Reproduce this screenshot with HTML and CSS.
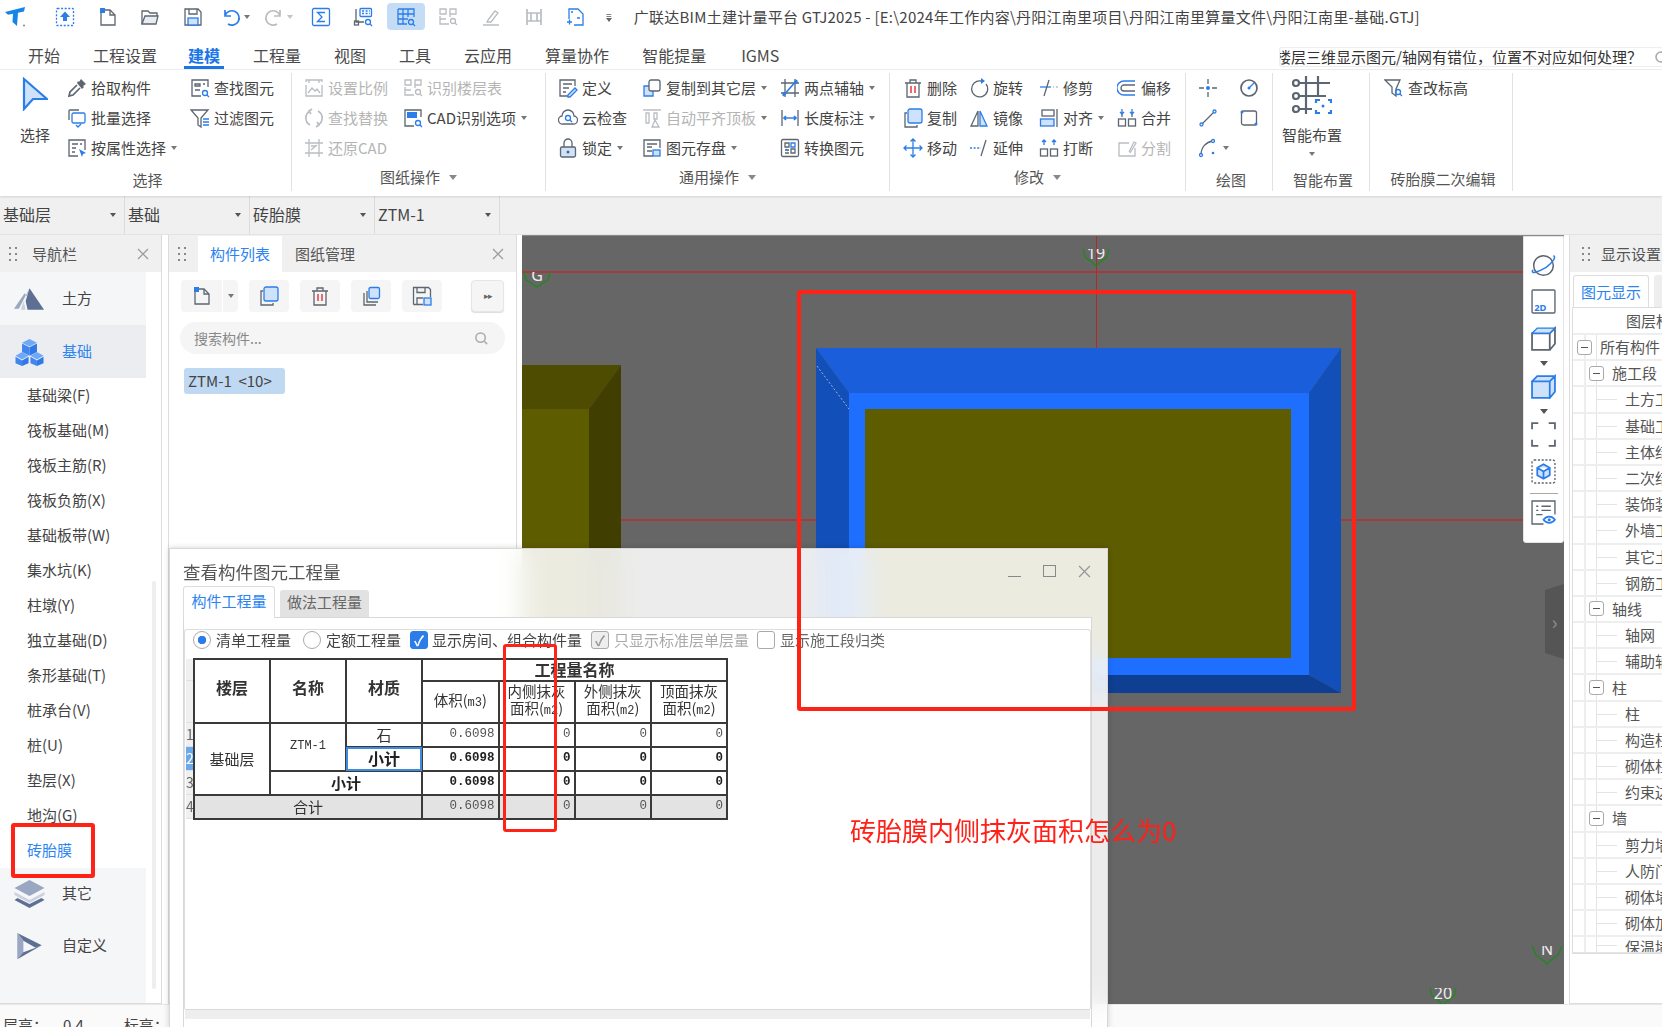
FILE: index.html
```html
<!DOCTYPE html>
<html lang="zh-CN">
<head>
<meta charset="utf-8">
<title>广联达BIM土建计量平台 GTJ2025</title>
<link rel="stylesheet" href="styles.css">
</head>
<body>
<svg class="sprite" aria-hidden="true">
<defs><clipPath id="cut"><rect x="-20" y="0" width="40" height="30"/></clipPath></defs>
<symbol id="logo" viewBox="0 0 22 22"><path class="bf2" d="M1 6 21 1l-1 4.500-6 1.200L13 20 8.500 16l.5-8.200-5 1z"/><circle class="bf3" cx="20" cy="19.500" r="1"/></symbol>
<symbol id="upload" viewBox="0 0 20 20"><rect class="b dash" x="1.500" y="1.500" width="17" height="17" rx="1"/><path class="bf" d="M10 4.500 15 10h-3v4H8v-4H5z"/></symbol>
<symbol id="newf" viewBox="0 0 20 20"><path class="g" d="M3 3h9l5 5v10H3z"/><path class="g" d="M12 3v5h5"/><rect class="bf" x="2" y="1" width="5" height="5"/></symbol>
<symbol id="folder" viewBox="0 0 20 20"><path class="g" d="M2 17V4h6l2 2h7v3"/><path class="g lfn" d="M2 17l3-8h13l-2 8z"/></symbol>
<symbol id="save" viewBox="0 0 20 20"><path class="g" d="M2 2h13l3 3v13H2z"/><path class="g" d="M6 2v5h8V2"/><rect class="b lf" x="5" y="11" width="10" height="7"/></symbol>
<symbol id="undo" viewBox="0 0 20 20"><path class="b w2" d="M4 3v6h6M4 9a7.200 7.200 0 1 1 3 8"/></symbol>
<symbol id="redo" viewBox="0 0 20 20"><path class="lg w2" d="M16 3v6h-6m6 0a7.200 7.200 0 1 0-3 8"/></symbol>
<symbol id="sigma" viewBox="0 0 20 20"><rect class="b" x="1.500" y="1.500" width="17" height="17" rx="1.500"/><path class="b" d="M14 5.500H6.500L11 10l-4.500 4.500H14"/></symbol>
<symbol id="cadq" viewBox="0 0 20 20"><path class="g" d="M3 2v13h8"/><rect class="b" x="7" y="1.500" width="11.500" height="8" rx="1"/><path class="b dash" d="M9 4h8M9 6.500h8"/><rect class="g" x="1.500" y="14" width="4" height="4"/><circle class="b" cx="15" cy="15" r="2.500"/><path class="b" d="m17 17 2 2"/></symbol>
<symbol id="gridq" viewBox="0 0 20 20"><path class="b" d="M2 2h16v8M2 2v15h9M2 7h16M2 12h10M7 2v15M12 2v8"/><circle class="b" cx="15" cy="15" r="2.500"/><path class="b" d="m17 17 2 2"/></symbol>
<symbol id="floors" viewBox="0 0 20 20"><path class="lg" d="M2 2h6v5H2zM12 2h6v5h-6zM2 9v8h9M2 12h6M12 7v3"/><circle class="lg" cx="15" cy="14" r="2.500"/><path class="lg" d="m17 16 2 2"/></symbol>
<symbol id="pen" viewBox="0 0 20 20"><path class="lg" d="m7 13 7-9 3 2-7 9H6zM2 18h16"/></symbol>
<symbol id="cols" viewBox="0 0 20 20"><path class="lg w2" d="M3 2v16M17 2v16M3 6h14M3 14h14M7 6v8M13 6v8"/></symbol>
<symbol id="loop" viewBox="0 0 20 20"><path class="b" d="M3 12V2h9l5 5v11H8"/><path class="b" d="M6 15H1m2.500-2.500v5M7 5H5M14 11h-3"/></symbol>
<symbol id="arrow" viewBox="0 0 26 34"><path class="lf b w3" d="M2 2 25 22 11 22 2 32z"/></symbol>
<symbol id="pick" viewBox="0 0 20 20"><path class="gf" d="m12 4 2-3 5 5-3 2 1 1-2 2-5-6 1-2z"/><path class="g w2" d="M10 7 3 14l-1 4 4-1 7-7"/></symbol>
<symbol id="batch" viewBox="0 0 20 20"><path class="g" d="M12 2H3a1 1 0 0 0-1 1v9"/><rect class="b" x="5" y="5" width="13" height="10" rx="1.500"/><path class="b" d="m9 17 2 2 3-3"/></symbol>
<symbol id="attr" viewBox="0 0 20 20"><path class="g" d="M18 12V2H2v16h9"/><path class="g" d="M5 6h6M5 10h4M5 14h3M13 6h2"/><path class="bf" d="m12 11 7 4-3 1-1 3z"/></symbol>
<symbol id="find" viewBox="0 0 20 20"><path class="g" d="M18 9V2H2v16h9"/><path class="g" d="M5 6h5v2H5zM13 6h2M5 12h5"/><circle class="b" cx="15" cy="15" r="2.500"/><path class="b" d="m17 17 2 2"/></symbol>
<symbol id="filter" viewBox="0 0 20 20"><path class="g" d="M1 2h17l-7 8v9l-3-2v-7z"/><path class="b" d="M13 11h6M13 14h6M13 17h6"/></symbol>
<symbol id="scale" viewBox="0 0 20 20"><path class="lg" d="M2 4V2h16v2M2 7v11h16V7M5 2v3M15 2v3M4 15l4-5 3 3 2-2 3 4"/></symbol>
<symbol id="replace" viewBox="0 0 20 20"><path class="lg w2" d="M6 3a8 8 0 0 0 0 14M14 3a8 8 0 0 1 0 14M8 1 5 3l2 3M12 19l3-2-2-3"/></symbol>
<symbol id="cadopt" viewBox="0 0 20 20"><path class="g" d="M18 9V2H2v16h9"/><rect class="bf" x="4" y="4" width="10" height="6"/><circle class="b" cx="15" cy="15" r="2.500"/><path class="b" d="m17 17 2 2"/></symbol>
<symbol id="restore" viewBox="0 0 20 20"><path class="lg" d="M5 1v18M15 1v18M1 5h18M1 15h18M7 12l6-5M7 8h5"/></symbol>
<symbol id="define" viewBox="0 0 20 20"><path class="g" d="M17 8V2H2v16h8"/><path class="g" d="M5 6h9M5 10h6M5 14h3"/><path class="b lf" d="m10 17 7-7 2 2-7 7h-2z"/></symbol>
<symbol id="cloud" viewBox="0 0 20 20"><path class="g" d="M5 16a4 4 0 0 1-1-8 6 6 0 0 1 12 0 4 4 0 0 1-1 8z"/><circle class="b" cx="10" cy="10" r="2.500"/><path class="b" d="m12 12 2 2"/></symbol>
<symbol id="lock" viewBox="0 0 20 20"><path class="g" d="M6 9V5a4 4 0 0 1 8 0v4"/><rect class="g lf" x="2.500" y="9" width="15" height="10" rx="1.500"/><circle class="gf" cx="10" cy="14" r="1.500"/></symbol>
<symbol id="copyto" viewBox="0 0 20 20"><path class="b lf" d="M2 8h9v10H2z"/><rect class="g wf" x="7" y="2" width="11" height="11" rx="2"/></symbol>
<symbol id="autoal" viewBox="0 0 20 20"><path class="lg" d="M1 2h18M4 5v10h3V5zM12 5v6h3V5zM13 12l-3 7h7z"/></symbol>
<symbol id="store" viewBox="0 0 20 20"><path class="g" d="M18 10V2H2v16h9"/><path class="g" d="M5 6h10M5 9h5M5 13h5"/><rect class="b lf" x="11" y="12" width="7" height="6"/></symbol>
<symbol id="twop" viewBox="0 0 20 20"><path class="g" d="M5 1v18M15 1v18M1 5h18M1 15h18"/><path class="b w2" d="M3 18 17 2"/><circle class="bf" cx="4" cy="16" r="1.800"/><circle class="bf" cx="16" cy="4" r="1.800"/></symbol>
<symbol id="dim" viewBox="0 0 20 20"><path class="g" d="M2 2v16M18 2v16"/><path class="b w2" d="M4 10h12M6 8l-2 2 2 2M14 8l2 2-2 2"/></symbol>
<symbol id="conv" viewBox="0 0 20 20"><rect class="g" x="1.500" y="1.500" width="17" height="17" rx="1.500"/><path class="g" d="M5 5h4v4H5zM11 11h4v4h-4zM5 12h4M5 15h4"/><path class="b" d="M11 5h4v4h-4zM8 13l-2-2"/></symbol>
<symbol id="del" viewBox="0 0 20 20"><path class="g" d="M2 5h16M7 5V2h6v3M4 5v14h12V5"/><path class="r" d="M8 8v7M12 8v7"/></symbol>
<symbol id="rot" viewBox="0 0 20 20"><path class="g" d="M12 3a8 8 0 1 0 5 3"/><path class="bf" d="m12 0 4 3-4 3z"/></symbol>
<symbol id="trim" viewBox="0 0 20 20"><path class="b" d="M1 9h11"/><path class="g" d="M5 18 10 2"/><path class="lg" d="M14 9h1M17 9h2"/></symbol>
<symbol id="offset" viewBox="0 0 20 20"><path class="b" d="M18 3H7a6.500 6.500 0 0 0 0 14h11"/><path class="g" d="M18 7H7a3 3 0 0 0 0 6h11"/></symbol>
<symbol id="copy" viewBox="0 0 20 20"><path class="g" d="M4 5H2v14h12v-2"/><rect class="b lf" x="5" y="1" width="14" height="14" rx="2"/></symbol>
<symbol id="mirror" viewBox="0 0 20 20"><path class="g" d="M9 3 2 18h7z"/><path class="lf b" d="m11 3 7 15h-7z"/></symbol>
<symbol id="align" viewBox="0 0 20 20"><path class="g" d="M18 1v18"/><rect class="g" x="3" y="2" width="12" height="6"/><rect class="b lf" x="1.500" y="11" width="13.500" height="7"/></symbol>
<symbol id="merge" viewBox="0 0 20 20"><rect class="g" x="1.500" y="11" width="7" height="7"/><rect class="g" x="11.500" y="11" width="7" height="7"/><path class="g" d="M5 6v3M15 6v3"/><path class="b" d="M5 1v5M3 4l2 2 2-2M15 1v5M13 4l2 2 2-2"/></symbol>
<symbol id="move" viewBox="0 0 20 20"><path class="b" d="M10 1v18M1 10h18M7.500 3.500 10 1l2.500 2.500M7.500 16.500 10 19l2.500-2.500M3.500 7.500 1 10l2.500 2.500M16.500 7.500 19 10l-2.500 2.500"/></symbol>
<symbol id="ext" viewBox="0 0 20 20"><path class="b dash" d="M1 10h11"/><path class="g" d="m12 18 5-16"/></symbol>
<symbol id="brk" viewBox="0 0 20 20"><rect class="g" x="1.500" y="11" width="7" height="7"/><rect class="g" x="11.500" y="11" width="7" height="7"/><path class="b" d="M5 7V2M3 4l2-2 2 2M15 7V2M13 4l2-2 2 2"/></symbol>
<symbol id="split" viewBox="0 0 20 20"><path class="lg" d="M12 5H2v13h16v-8M12 14l5-10 2 1-6 10"/></symbol>
<symbol id="pt" viewBox="0 0 20 20"><path class="g" d="M10 1v5M10 14v5M1 10h5M14 10h5"/><circle class="bf" cx="10" cy="10" r="2"/></symbol>
<symbol id="circ" viewBox="0 0 20 20"><circle class="g w2" cx="10" cy="10" r="8"/><path class="b" d="m10 10 5-5"/><circle class="bf" cx="10" cy="10" r="1.500"/></symbol>
<symbol id="line" viewBox="0 0 20 20"><path class="g" d="m4 16 12-12"/><circle class="b wf" cx="3.500" cy="16.500" r="1.500"/><circle class="b wf" cx="16.500" cy="3.500" r="1.500"/></symbol>
<symbol id="rect" viewBox="0 0 20 20"><rect class="g" x="2.500" y="3" width="15" height="14" rx="2"/><circle class="bf" cx="3" cy="4" r="1.500"/><circle class="bf" cx="17" cy="16" r="1.500"/></symbol>
<symbol id="arc" viewBox="0 0 20 20"><path class="g" d="M3 17C3 9 8 4 15 3"/><circle class="b wf" cx="3" cy="17" r="1.500"/><circle class="b wf" cx="15" cy="3" r="1.500"/><circle class="bf" cx="15" cy="15" r="1.300"/></symbol>
<symbol id="smart" viewBox="0 0 40 40"><path class="g w3" d="M4 4h0M14 1v38M26 1v25M14 8h24M14 21h20"/><circle class="g wf w3" cx="4" cy="8" r="3"/><circle class="g wf w3" cx="4" cy="21" r="3"/><circle class="g wf w3" cx="4" cy="34" r="3"/><path class="g w3" d="M7 8h7M7 21h7M7 34h14"/><rect class="wfn" x="20" y="22" width="20" height="18"/><path class="b w3" d="M24 28v-3h4M36 25h3v3M39 35v3h-3M28 38h-4v-3"/><circle class="bf" cx="31" cy="31" r="1.500"/></symbol>
<symbol id="qh" viewBox="0 0 20 20"><path class="g" d="M1 2h15l-4 9v7l-4-3V9z"/><circle class="b" cx="14" cy="14" r="2.500"/><path class="b" d="m16 16 2 2"/></symbol>
<symbol id="mount" viewBox="0 0 32 24"><path class="mf1" d="M16 1 5 22H0L11 6l2 3z"/><path class="mf2" d="M16 1 31 23H14l-2-9z"/><path class="mf3" d="M10 14l2 9H7z"/></symbol>
<symbol id="cubes" viewBox="0 0 30 30"><path class="cb1" d="m15 1 8 4-8 4-8-4z"/><path class="cb2" d="m7 6 8 4v9l-8-4z"/><path class="cb3" d="m23 6-8 4v9l8-4z"/><path class="cb1" d="m7 15 7 4-7 4-7-4z"/><path class="cb2" d="m0 20 7 4v6l-7-3z"/><path class="cb3" d="m14 20-7 4v6l7-3z"/><path class="cb1" d="m23 15 7 4-7 4-7-4z"/><path class="cb2" d="m16 20 7 4v6l-7-3z"/><path class="cb3" d="m30 20-7 4v6l7-3z"/></symbol>
<symbol id="layers" viewBox="0 0 30 28"><path class="lyr1" d="M15 0 30 8l-15 8L0 8z"/><path class="lyr2" d="m0 12 15 8 15-8 0 3-15 8-15-8z" opacity=".7"/><path class="lyr3" d="m3 18 12 6 12-6 3 2-15 8-15-8z"/></symbol>
<symbol id="custom" viewBox="0 0 30 32"><path class="lyr3" d="M1 1 29 15 22 18 8 10z"/><path class="lyr1" d="M1 1 8 10V23L1 31z"/><path class="lyr3" d="M8 23 22 18 29 15 1 31z"/></symbol>
<symbol id="dup2" viewBox="0 0 20 20"><path class="g" d="M3 7v12h12M1 4"/><path class="g" d="M6 5v11h11"/><rect class="b lf" x="8" y="1.500" width="10.500" height="11" rx="1.500"/></symbol>
<symbol id="saveall" viewBox="0 0 20 20"><path class="g" d="M1.500 18.500v-17h15l2 2V11M1.500 18.500H11M5 1.500v5h8v-5M5 18.500V12h6"/><rect class="b lf" x="12" y="12" width="7" height="7"/></symbol>
<symbol id="planet" viewBox="0 0 28 28"><circle class="g w2" cx="14" cy="14" r="11"/><path class="b w2" d="M2 19C-1 25 10 20 17 16 24 11 29 4 25 3"/></symbol>
<symbol id="t2d" viewBox="0 0 24 24"><rect class="g" x="1" y="1" width="22" height="22" rx="1"/><text x="3" y="21" class="t2d">2D</text></symbol>
<symbol id="cube" viewBox="0 0 24 24"><path class="g w2" d="M1 7h17v16H1zM18 7l5-5v15l-5 6"/><path class="b lf" d="M1 7l5-5h17l-5 5z"/></symbol>
<symbol id="cubef" viewBox="0 0 24 24"><path class="b lf w2" d="M1 7h17v16H1zM18 7l5-5v15l-5 6zM1 7l5-5h17l-5 5z"/></symbol>
<symbol id="frame" viewBox="0 0 24 24"><path class="g w2" d="M1 7V1h6M17 1h6v6M23 17v6h-6M7 23H1v-6"/></symbol>
<symbol id="dcube" viewBox="0 0 24 24"><rect class="g dash" x="1" y="1" width="22" height="22" rx="2"/><path class="b lf w2" d="m12 5 6 3.500v7L12 19l-6-3.500v-7zM6 8.500l6 3.500 6-3.500M12 12v7"/></symbol>
<symbol id="listeye" viewBox="0 0 24 24"><path class="g" d="M23 14V1H1v22h11M5 6h2M10 6h9M5 10h2M10 10h9M5 14h6"/><path class="b w2 wf" d="M12 19c3-4 8-4 11 0-3 4-8 4-11 0z"/><circle class="bf" cx="17.500" cy="19" r="1.500"/></symbol>
<symbol id="mag" viewBox="0 0 16 16"><circle class="mg" cx="7" cy="7" r="5"/><path class="mg" d="m11 11 3 3"/></symbol>
<symbol id="x" viewBox="0 0 12 12"><path class="xx" d="m1 1 10 10M11 1 1 11"/></symbol>
</svg>

<header class="titlebar">
  <svg class="logo"><use href="#logo"/></svg>
  <div class="quick">
    <svg class="ic"><use href="#upload"/></svg>
    <svg class="ic"><use href="#newf"/></svg>
    <svg class="ic"><use href="#folder"/></svg>
    <svg class="ic"><use href="#save"/></svg>
    <span class="qi"><svg class="ic"><use href="#undo"/></svg><i class="caret qc"></i></span>
    <span class="qi"><svg class="ic"><use href="#redo"/></svg><i class="caret qc light"></i></span>
    <svg class="ic"><use href="#sigma"/></svg>
    <svg class="ic"><use href="#cadq"/></svg>
    <span class="active"><svg class="ic"><use href="#gridq"/></svg></span>
    <svg class="ic"><use href="#floors"/></svg>
    <svg class="ic"><use href="#pen"/></svg>
    <svg class="ic"><use href="#cols"/></svg>
    <svg class="ic"><use href="#loop"/></svg>
    <span class="customize">=<i class="caret tiny"></i></span>
  </div>
  <div class="apptitle">广联达BIM土建计量平台 GTJ2025 - [E:\2024年工作内容\丹阳江南里项目\丹阳江南里算量文件\丹阳江南里-基础.GTJ]</div>
</header>

<nav class="menubar">
  <span class="tab">开始</span><span class="tab">工程设置</span><span class="tab on">建模</span><span class="tab">工程量</span><span class="tab">视图</span><span class="tab">工具</span><span class="tab">云应用</span><span class="tab">算量协作</span><span class="tab">智能提量</span><span class="tab igms">IGMS</span>
  <div class="helpbox"><span class="helptext">楼层三维显示图元/轴网有错位，位置不对应如何处理？</span><svg class="helpmag"><use href="#mag"/></svg></div>
</nav>

<section class="ribbon">
  <div class="group g1">
    <div class="gbody">
      <div class="big bigsel"><svg class="bigarrow"><use href="#arrow"/></svg><span>选择</span></div>
      <span class="it"><svg class="ic"><use href="#pick"/></svg>拾取构件</span>
      <span class="it"><svg class="ic"><use href="#find"/></svg>查找图元</span>
      <span class="it"><svg class="ic"><use href="#batch"/></svg>批量选择</span>
      <span class="it"><svg class="ic"><use href="#filter"/></svg>过滤图元</span>
      <span class="it"><svg class="ic"><use href="#attr"/></svg>按属性选择<i class="caret"></i></span>
    </div>
    <div class="glabel low">选择</div>
  </div>
  <div class="group g2">
    <div class="gbody">
      <span class="it off"><svg class="ic"><use href="#scale"/></svg>设置比例</span>
      <span class="it off"><svg class="ic"><use href="#floors"/></svg>识别楼层表</span>
      <span class="it off"><svg class="ic"><use href="#replace"/></svg>查找替换</span>
      <span class="it"><svg class="ic"><use href="#cadopt"/></svg>CAD识别选项<i class="caret"></i></span>
      <span class="it off"><svg class="ic"><use href="#restore"/></svg>还原CAD</span>
    </div>
    <div class="glabel">图纸操作<i class="caret wide"></i></div>
  </div>
  <div class="group g3">
    <div class="gbody">
      <span class="it"><svg class="ic"><use href="#define"/></svg>定义</span>
      <span class="it"><svg class="ic"><use href="#copyto"/></svg>复制到其它层<i class="caret"></i></span>
      <span class="it"><svg class="ic"><use href="#twop"/></svg>两点辅轴<i class="caret"></i></span>
      <span class="it"><svg class="ic"><use href="#cloud"/></svg>云检查</span>
      <span class="it off"><svg class="ic"><use href="#autoal"/></svg>自动平齐顶板<i class="caret"></i></span>
      <span class="it"><svg class="ic"><use href="#dim"/></svg>长度标注<i class="caret"></i></span>
      <span class="it"><svg class="ic"><use href="#lock"/></svg>锁定<i class="caret"></i></span>
      <span class="it"><svg class="ic"><use href="#store"/></svg>图元存盘<i class="caret"></i></span>
      <span class="it"><svg class="ic"><use href="#conv"/></svg>转换图元</span>
    </div>
    <div class="glabel">通用操作<i class="caret wide"></i></div>
  </div>
  <div class="group g4">
    <div class="gbody">
      <span class="it"><svg class="ic"><use href="#del"/></svg>删除</span>
      <span class="it"><svg class="ic"><use href="#rot"/></svg>旋转</span>
      <span class="it"><svg class="ic"><use href="#trim"/></svg>修剪</span>
      <span class="it"><svg class="ic"><use href="#offset"/></svg>偏移</span>
      <span class="it"><svg class="ic"><use href="#copy"/></svg>复制</span>
      <span class="it"><svg class="ic"><use href="#mirror"/></svg>镜像</span>
      <span class="it"><svg class="ic"><use href="#align"/></svg>对齐<i class="caret"></i></span>
      <span class="it"><svg class="ic"><use href="#merge"/></svg>合并</span>
      <span class="it"><svg class="ic"><use href="#move"/></svg>移动</span>
      <span class="it"><svg class="ic"><use href="#ext"/></svg>延伸</span>
      <span class="it"><svg class="ic"><use href="#brk"/></svg>打断</span>
      <span class="it off"><svg class="ic"><use href="#split"/></svg>分割</span>
    </div>
    <div class="glabel">修改<i class="caret wide"></i></div>
  </div>
  <div class="group g5">
    <div class="gbody">
      <span class="it"><svg class="ic"><use href="#pt"/></svg></span>
      <span class="it"><svg class="ic"><use href="#circ"/></svg></span>
      <span class="it"><svg class="ic"><use href="#line"/></svg></span>
      <span class="it"><svg class="ic"><use href="#rect"/></svg></span>
      <span class="it"><svg class="ic"><use href="#arc"/></svg><i class="caret"></i></span>
    </div>
    <div class="glabel low">绘图</div>
  </div>
  <div class="group g6">
    <div class="gbody">
      <div class="big bigsmart"><svg class="bigicon"><use href="#smart"/></svg><span>智能布置</span><i class="caret"></i></div>
    </div>
    <div class="glabel low">智能布置</div>
  </div>
  <div class="group g7">
    <div class="gbody">
      <span class="it"><svg class="ic"><use href="#qh"/></svg>查改标高</span>
    </div>
    <div class="glabel low">砖胎膜二次编辑</div>
  </div>
</section>

<div class="selectors">
  <div class="sel">基础层<i class="caret dark"></i></div>
  <div class="sel">基础<i class="caret dark"></i></div>
  <div class="sel">砖胎膜<i class="caret dark"></i></div>
  <div class="sel">ZTM-1<i class="caret dark"></i></div>
</div>

<main class="workspace">
  <aside class="panel nav">
    <div class="phead"><i class="grip"></i><span class="ptitle">导航栏</span><svg class="close"><use href="#x"/></svg></div>
    <div class="navsec"><svg class="secicon"><use href="#mount"/></svg><span>土方</span></div>
    <div class="navsec cur"><svg class="secicon"><use href="#cubes"/></svg><span>基础</span></div>
    <ul class="navlist">
      <li>基础梁(F)</li><li>筏板基础(M)</li><li>筏板主筋(R)</li><li>筏板负筋(X)</li><li>基础板带(W)</li><li>集水坑(K)</li><li>柱墩(Y)</li><li>独立基础(D)</li><li>条形基础(T)</li><li>桩承台(V)</li><li>桩(U)</li><li>垫层(X)</li><li>地沟(G)</li><li class="sel-item">砖胎膜</li>
    </ul>
    <div class="navrest">
      <div class="navsec"><svg class="secicon"><use href="#layers"/></svg><span>其它</span></div>
      <div class="navsec"><svg class="secicon"><use href="#custom"/></svg><span>自定义</span></div>
    </div>
    <i class="navscroll"></i>
  </aside>

  <section class="panel comp">
    <div class="phead"><i class="grip"></i><span class="ptab on">构件列表</span><span class="ptab">图纸管理</span><svg class="close"><use href="#x"/></svg></div>
    <div class="ptools">
      <span class="pbtn split"><svg class="ic"><use href="#newf"/></svg></span><span class="pcaret"><i class="caret"></i></span>
      <span class="pbtn"><svg class="ic"><use href="#copy"/></svg></span>
      <span class="pbtn"><svg class="ic"><use href="#del"/></svg></span>
      <span class="pbtn"><svg class="ic"><use href="#dup2"/></svg></span>
      <span class="pbtn"><svg class="ic"><use href="#saveall"/></svg></span>
      <span class="pbtn more">▸▸</span>
    </div>
    <div class="search"><span>搜索构件...</span><svg class="smag"><use href="#mag"/></svg></div>
    <span class="chip">ZTM-1 &nbsp;&lt;10&gt;</span>
  </section>

  <section class="canvas">
    <svg class="scene" viewBox="0 0 1042 769">
      <polygon class="o1" points="0,129 99,129 67,173 0,173"/>
      <rect class="o2" x="0" y="173" width="67" height="596"/>
      <polygon class="o3" points="99,129 99,769 67,769 67,173"/>
      <line class="ax" x1="0" y1="36" x2="1002" y2="36"/>
      <line class="ax" x1="99" y1="284" x2="294" y2="284"/>
      <line class="ax" x1="819" y1="284" x2="1002" y2="284"/>
      <line class="ax v" x1="574.500" y1="0" x2="574.500" y2="112"/>
      <polygon class="b1" points="294,112 819,112 787,157 327,157"/>
      <polygon class="b2" points="294,112 327,157 327,439 294,457"/>
      <polygon class="b2" points="819,112 787,157 787,439 819,457"/>
      <polygon class="b3" points="327,439 787,439 819,457 294,457"/>
      <rect class="b0" x="327" y="157" width="460" height="282"/>
      <rect class="o2" x="343" y="173" width="426" height="249"/>
      <line class="dashl" x1="295" y1="130" x2="327" y2="173"/>
      <g transform="translate(574 13)"><path class="bub" d="M-13 0-11 8-3 14 0 17 3 14 11 8 13 0"/><text class="axt" y="10">19</text></g>
      <g transform="translate(15 36)"><path class="bub" d="M-13 0-11 8-3 13 0 15 3 13 11 8 13 0"/><text class="axt" y="9">G</text></g>
      <g transform="translate(921 752)"><path class="bub" d="M-13 0-11 8-3 14 0 17 3 14 11 8 13 0"/><text class="axt" y="11">20</text></g>
      <g transform="translate(1025 710)"><path class="bub" d="M-15 0-11 9-3 15 0 18 3 15 11 9 15 0"/><text class="axt" y="9">N</text></g>
    </svg>
    <div class="vtools">
      <svg class="vt"><use href="#planet"/></svg>
      <svg class="vt"><use href="#t2d"/></svg>
      <svg class="vt"><use href="#cube"/></svg><i class="caret dark big-c"></i>
      <svg class="vt"><use href="#cubef"/></svg><i class="caret dark big-c"></i>
      <svg class="vt"><use href="#frame"/></svg>
      <svg class="vt"><use href="#dcube"/></svg>
      <hr class="vsep">
      <svg class="vt"><use href="#listeye"/></svg>
    </div>
    <div class="handle">›</div>
  </section>

  <aside class="panel show">
    <div class="phead"><i class="grip"></i><span class="ptitle nowrap">显示设置</span></div>
    <div class="showtabs"><span class="stab on">图元显示</span><span class="stab"></span></div>
    <div class="tree">
      <div class="thead"><span>图层构件</span></div>
      <div class="tr l0"><i class="tog"></i>所有构件</div>
      <div class="tr l1"><i class="tog"></i>施工段</div>
      <div class="tr l2">土方工程</div><div class="tr l2">基础工程</div><div class="tr l2">主体结构</div><div class="tr l2">二次结构</div><div class="tr l2">装饰装修</div><div class="tr l2">外墙工程</div><div class="tr l2">其它土建</div><div class="tr l2">钢筋工程</div>
      <div class="tr l1"><i class="tog"></i>轴线</div>
      <div class="tr l2">轴网</div><div class="tr l2">辅助轴线</div>
      <div class="tr l1"><i class="tog"></i>柱</div>
      <div class="tr l2">柱</div><div class="tr l2">构造柱</div><div class="tr l2">砌体柱</div><div class="tr l2">约束边缘</div>
      <div class="tr l1"><i class="tog"></i>墙</div>
      <div class="tr l2">剪力墙</div><div class="tr l2">人防门框</div><div class="tr l2">砌体墙</div><div class="tr l2">砌体加筋</div><div class="tr l2 clipr">保温墙</div>
    </div>
  </aside>
</main>

<footer class="status"><span class="st1">层高：</span><span class="st2">0.4</span><span class="st3">标高：</span></footer>

<section class="dialog">
  <div class="dtitle"><span>查看构件图元工程量</span>
    <div class="wctl"><i class="w-min"></i><i class="w-max"></i><svg class="w-x"><use href="#x"/></svg></div>
  </div>
  <div class="dtabs"><span class="dtab on">构件工程量</span><span class="dtab">做法工程量</span></div>
  <div class="dframe">
    <div class="dpane">
      <div class="opts">
        <label class="opt o-a"><i class="radio on"></i>清单工程量</label>
        <label class="opt o-b"><i class="radio"></i>定额工程量</label>
        <label class="opt o-c"><i class="check on">✓</i>显示房间、组合构件量</label>
        <label class="opt o-d dis"><i class="check dis">✓</i>只显示标准层单层量</label>
        <label class="opt o-e"><i class="check"></i>显示施工段归类</label>
      </div>
      <table class="qty">
        <colgroup><col class="c0"><col class="c1"><col class="c1"><col class="c1"><col class="c2"><col class="c1"><col class="c2"><col class="c1"></colgroup>
        <tr class="r1"><td class="rh"></td><th rowspan="2" class="lift">楼层</th><th rowspan="2" class="lift">名称</th><th rowspan="2" class="lift">材质</th><th colspan="4">工程量名称</th></tr>
        <tr class="r2"><td class="rh"></td><td class="hc">体积(<span class="m">m3</span>)</td><td class="hc">内侧抹灰<br>面积(<span class="m">m2</span>)</td><td class="hc">外侧抹灰<br>面积(<span class="m">m2</span>)</td><td class="hc">顶面抹灰<br>面积(<span class="m">m2</span>)</td></tr>
        <tr class="r3"><td class="rh">1</td><td rowspan="3" class="ct">基础层</td><td rowspan="2" class="ct m">ZTM-1</td><td class="ct">石</td><td class="n">0.6098</td><td class="n">0</td><td class="n">0</td><td class="n">0</td></tr>
        <tr class="r3"><td class="rh rhsel">2</td><td class="ct bold cursor">小计</td><td class="n bold">0.6098</td><td class="n bold">0</td><td class="n bold">0</td><td class="n bold">0</td></tr>
        <tr class="r3"><td class="rh">3</td><td colspan="2" class="ct bold">小计</td><td class="n bold">0.6098</td><td class="n bold">0</td><td class="n bold">0</td><td class="n bold">0</td></tr>
        <tr class="r3 total"><td class="rh">4</td><td colspan="3" class="ct">合计</td><td class="n">0.6098</td><td class="n">0</td><td class="n">0</td><td class="n">0</td></tr>
      </table>
    </div>
    <div class="hscroll"></div>
  </div>
</section>

<i class="mark m-big"></i>
<i class="mark m-col"></i>
<i class="mark m-nav"></i>
<div class="note">砖胎膜内侧抹灰面积怎么为0</div>
</body>
</html>
```

FILE: styles.css
```css
*{box-sizing:border-box}
html,body{margin:0;padding:0}
body{position:relative;width:1662px;height:1027px;overflow:hidden;background:#fff;color:#444;font-family:"Noto Sans CJK SC","Noto Sans",sans-serif;font-size:14px;line-height:1.2}
i{font-style:normal}
.sprite{position:absolute;width:0;height:0;overflow:hidden}

/* icon paint */
svg *{stroke-width:1.3}
.g{stroke:#5c6570;fill:none}
.lg{stroke:#b9bdc2;fill:none}
.b{stroke:#2b7de9;fill:none}
.r{stroke:#e8474c;fill:none;stroke-width:1.6}
.bf{fill:#2b7de9;stroke:none}
.bf2{fill:#1685e8;stroke:none}
.bf3{fill:#888;stroke:none}
.gf{fill:#5c6570;stroke:none}
.lf{fill:#cfe2fb}
.lfn{fill:#e9edf3}
.wf{fill:#fff}
.wfn{fill:#fff;stroke:none}
.w2{stroke-width:1.7}
.w3{stroke-width:2.2}
.dash{stroke-dasharray:2 1.600}
.mf1{fill:#9aa7bd}.mf2{fill:#5d6f92}.mf3{fill:#c9d1dd}
.cb1{fill:#6fa8f7}.cb2{fill:#3f87ee}.cb3{fill:#2f78e6}
.lyr1{fill:#9aa7c2}.lyr2{fill:#b9c2d5}.lyr3{fill:#5d6f92}
.mg{stroke:#aaa;fill:none;stroke-width:1.6}
.xx{stroke:#999;fill:none;stroke-width:1.2}
.t2d{font:700 9px "Noto Sans",sans-serif;fill:#2b7de9;stroke:none}

.caret{display:inline-block;width:0;height:0;border-left:3.5px solid transparent;border-right:3.5px solid transparent;border-top:4px solid #777;margin-left:5px;vertical-align:middle}
.it .caret{margin-left:1px}
.caret.light{border-top-color:#c4c4c4}
.caret.dark{border-top-color:#555}
.caret.wide{border-left-width:4.500px;border-right-width:4.500px;border-top-width:5px;border-top-color:#888;margin-left:9px}
.caret.tiny{margin:0;display:block;border-top-color:#666}

/* title bar */
.titlebar{height:33px;display:flex;align-items:center;padding-left:4px;white-space:nowrap}
.logo{width:22px;height:22px;flex:none}
.quick{display:flex;align-items:center;gap:22.600px;margin-left:29px}
.ic{width:20px;height:20px;flex:none;display:block}
.qi{display:flex;align-items:center;width:20px;margin-left:-4px;margin-right:4px}
.qc{margin-left:3px;margin-right:-10px;flex:none}
.active{background:#c5dcf5;border-radius:4px;padding:3.500px 9px;margin:0 -9px}
.customize{width:8px;font-size:10px;line-height:6px;color:#666;display:flex;flex-direction:column;align-items:center;margin-left:-4px}
.apptitle{margin-left:21px;font-size:15px;color:#444;letter-spacing:.25px}

/* menu */
.menubar{height:37px;display:flex;padding-left:28px;gap:33px;border-bottom:1px solid #eee;white-space:nowrap;position:relative}
.tab{font-size:16px;padding-top:10px;color:#4a4a4a;line-height:24px}
.tab.on{color:#1976e8;font-weight:700;padding-left:4px;padding-right:4px;margin:0 -4px 0 -6px;box-shadow:inset 0 -3px #1976e8}
.tab.igms{margin-left:2px}
.helpbox{margin-left:auto;width:383px;height:20px;margin-top:14px;border:1px solid #eee;border-width:1px 0 1px 1px;border-radius:3px 0 0 3px;display:flex;justify-content:flex-end;align-items:center;overflow:hidden;padding-right:20px;position:relative}
.helptext{flex:none;font-size:15px;color:#333;line-height:18px}
.helpmag{position:absolute;right:-8px;top:2px;width:16px;height:16px}

/* ribbon */
.ribbon{height:126px;display:flex;align-items:flex-start;box-shadow:0 1px 2px rgba(0,0,0,.12);position:relative;background:#fff}
.group{height:118px;border-right:1px solid #e2e2e2;margin-top:3px;flex:none;display:flex;flex-direction:column}
.gbody{display:grid;grid-auto-rows:30px;height:90px;margin-top:0;align-items:center;justify-items:start}
.g1{width:292px}.g1 .gbody{grid-template-columns:67px 123px 1fr;padding-left:0}
.g2{width:254px}.g2 .gbody{padding-left:12px;grid-template-columns:99px 1fr}
.g3{width:344px}.g3 .gbody{padding-left:12px;grid-template-columns:84px 138px 1fr}
.g4{width:296px}.g4 .gbody{padding-left:13px;grid-template-columns:66px 70px 78px 1fr}
.g5{width:87px}.g5 .gbody{padding-left:12px;grid-template-columns:41px 1fr}
.g6{width:97px}.g6 .gbody{padding-left:9px;grid-template-columns:1fr}
.g7{width:143px}.g7 .gbody{padding-left:14px;grid-template-columns:1fr}
.it{display:flex;align-items:center;gap:4px;font-size:15px;color:#444;white-space:nowrap}
.it.off{color:#b5b5b5}
.it.off .g{stroke:#b9bdc2}
.big{display:flex;flex-direction:column;align-items:center;grid-row:1 / span 3;font-size:15px;color:#444}
.bigsel{width:70px;padding-top:4px;align-self:start}
.bigarrow{width:26px;height:34px;margin-bottom:15px}
.bigsmart{width:60px;padding-top:2px;align-self:start;justify-self:start}
.bigicon{width:40px;height:40px;margin-bottom:11px}
.bigsmart .caret{margin:8px 0 0}
.glabel{height:24px;display:flex;justify-content:center;align-items:center;font-size:15px;color:#555;margin-top:2px}
.glabel.low{margin-top:5px;padding-left:4px}

/* selectors */
.selectors{height:39px;background:#f0f0f0;display:flex;border-bottom:1px solid #e3e3e3}
.sel{width:125px;border-right:1px solid #dcdcdc;padding:0 8px 0 3px;display:flex;align-items:center;justify-content:space-between;font-size:16px;color:#444}

/* workspace */
.workspace{height:769px;display:flex;background:#fff}
.panel{border:1px solid #dcdcdc;border-top:0;position:relative;flex:none;background:#fff}
.nav{width:162px;border-left:0;display:flex;flex-direction:column}
.comp{width:349px;margin-left:6px}
.show{width:93px;margin-left:5px;border-right:0;overflow:hidden;display:flex;flex-direction:column}
.phead{height:37px;background:#f0f0f0;display:flex;align-items:center;font-size:15px;color:#555;flex:none;padding-left:7px;position:relative}
.grip{width:12px;height:18px;flex:none;background-image:radial-gradient(circle,#888 1.200px,transparent 1.400px);background-size:6px 6px;margin-right:13px}
.close{width:12px;height:12px;margin-left:auto;margin-right:12px;flex:none}
.navsec{height:53px;display:flex;align-items:center;width:146px;background:#f5f6f8;font-size:15px;color:#444}
.navsec span{margin-left:17px;padding-bottom:2px}
.navsec:first-of-type{height:51px}
.navsec.cur{background:#ecedf1;color:#2b84f0}
.secicon{width:31px;height:28px;margin-left:14px;flex:none}
.navlist{list-style:none;margin:0;padding:0;flex:none}
.navlist li{height:35px;line-height:33px;padding-left:27px;font-size:15px;color:#444}
.navlist .sel-item{color:#2b84f0}
.navrest{flex:1;width:146px;background:#f5f6f8}
.navscroll{position:absolute;left:152px;top:346px;width:4px;height:408px;background:#eee;border-radius:2px}

.ptab{height:36px;display:flex;align-items:center;padding:0 14px;color:#555;margin-right:-1px}
.ptab.on{background:#fff;color:#2b84f0;width:84px;justify-content:center;padding:0;margin-right:13px}
.ptab:nth-of-type(2){padding-left:0}
.comp .grip{margin-right:10px}
.comp .phead .close{margin-right:12px}
.ptools{display:flex;margin:8px 0 0 12px;height:32px}
.pbtn{width:40px;height:32px;background:#f5f5f5;border-radius:4px;display:flex;align-items:center;justify-content:center;margin-right:11px}
.pbtn.split{width:41px;margin-right:1px;border-radius:4px 0 0 4px}
.pcaret{width:15px;height:32px;background:#f5f5f5;border-radius:0 4px 4px 0;margin-right:11px;display:flex;align-items:center;justify-content:center}
.pcaret .caret{margin:0}
.pbtn.more{width:33px;margin:0 0 0 18px;border:1px solid #e6e6e6;box-shadow:0 1px 1px #ddd;font-size:9px;color:#666;letter-spacing:-1px}
.search{height:32px;margin:10px 11px 0 11px;background:#f5f5f5;border-radius:16px;display:flex;align-items:center;padding:0 16px 0 14px;font-size:14px;color:#888;justify-content:space-between}
.smag{width:15px;height:15px}
.chip{display:inline-block;margin:14px 0 0 15px;width:101px;height:26px;line-height:26px;background:#bfd9f2;border-radius:3px;padding-left:4px;font-size:15px;color:#444;white-space:nowrap}

/* canvas */
.canvas{width:1042px;margin-left:5px;background:#666;position:relative;flex:none;overflow:hidden;border-top:1px solid #8a8a8a}
.scene{display:block;width:1042px;height:769px;position:absolute;left:0;top:0}
.scene *{stroke-width:1}
.o1{fill:#4e4c00}.o2{fill:#5e5c00}.o3{fill:#403e00}
.ax{stroke:#e01414}
.ax.v{stroke:#b32828}
.b0{fill:#1f6fff}.b1{fill:#1a5edc}.b2{fill:#134fb8}.b3{fill:#0f3f92}
.dashl{stroke:#9db4d8;stroke-dasharray:2 2}
.bub{fill:none;stroke:#1d8a1d;stroke-width:1.300}
.axt{fill:#eee;font:400 16px "Noto Sans",sans-serif;text-anchor:middle;stroke:none;clip-path:url(#cut)}
.vtools{position:absolute;right:0;top:0;width:41px;height:307px;background:#fff;border:1px solid #e4e4e4;border-radius:0 0 3px 3px;display:flex;flex-direction:column;align-items:center;padding-top:16px}
.vt{width:25px;height:25px;flex:none;margin-bottom:12px}
.big-c{margin:-2px 0 8px;border-left-width:4px;border-right-width:4px;border-top-width:5px}
.vt:nth-of-type(1){margin-bottom:11px}
.vsep{width:28px;border:0;border-top:1px solid #aaa;margin:-3px 0 6px}
.handle{position:absolute;right:0;top:348px;width:19px;height:75px;background:#555;color:#8f8f8f;font-size:20px;display:flex;align-items:center;justify-content:center;clip-path:polygon(0 8%,100% 0,100% 100%,0 92%)}

/* right panel */
.show .phead{padding-left:8px}
.show .grip{margin-right:9px;margin-left:2px}
.nowrap{white-space:nowrap;font-size:15px}
.showtabs{display:flex;padding:3px 0 0 3px;height:35px;flex:none;gap:5px}
.stab{width:76px;flex:none;height:32px;font-size:15px;display:flex;align-items:center;justify-content:center;background:#eee;border-radius:3px 3px 0 0}
.stab.on{background:#fff;color:#2b84f0;border:1px solid #ddd;border-bottom:0}
.tree{margin-left:2px;border:1px solid #ddd;border-right:0;border-top:1px solid #ddd;flex:none;width:100%;white-space:nowrap;font-size:15px;color:#555}
.thead{height:27px;display:flex;align-items:center;padding-left:53px;border-bottom:2px solid #eee}
.tr{height:26.200px;display:flex;align-items:center;border-bottom:2px solid #eee;position:relative;background-image:linear-gradient(#eee,#eee),linear-gradient(#e4e4e4,#e4e4e4);background-size:2px 100%,1px 100%;background-position:11px 0,23px 0;background-repeat:no-repeat}
.tog{width:15px;height:15px;border:1px solid #aaa;border-radius:3px;background:linear-gradient(#555,#555) center/7px 1px no-repeat #fff;flex:none;margin-right:8px}
.l0{padding-left:4px}
.l1{padding-left:16px}
.l2{padding-left:52px}
.l2::before{content:"";position:absolute;left:24px;top:50%;width:20px;height:1px;background:#e4e4e4}
.tr.clipr{height:16px;overflow:hidden;border-bottom:1px solid #e4e4e4;align-items:flex-start;line-height:20px}

/* status */
.status{height:23px;background:#fafafa;position:relative;padding:10px 0 0 3px;display:flex;font-size:15px;color:#444;line-height:20px;border-top:1px solid #e8e8e8;white-space:nowrap}
.st2{margin-left:15px}
.st3{margin-left:40px}

/* dialog */
.dialog{position:absolute;left:169px;top:548px;width:939px;height:482px;background:rgba(255,255,255,.88);-webkit-backdrop-filter:blur(14px);backdrop-filter:blur(14px);border:1px solid #d8d8d8;box-shadow:0 0 6px rgba(0,0,0,.18);padding:0 15px 0 13px}
.dtitle{height:36px;display:flex;align-items:center;justify-content:space-between;font-size:17.500px;color:#555;padding-top:8px}
.wctl{display:flex;align-items:center;gap:22px;margin-right:1px}
.w-min{width:13px;height:1px;background:#888;margin-top:10px}
.w-max{width:13px;height:12px;border:1px solid #888}
.w-x{width:13px;height:13px}
.dtabs{height:32px;display:flex;align-items:flex-end;gap:5px}
.dtab{width:89px;height:27px;background:#e2e2e2;border-radius:3px 3px 0 0;font-size:15px;color:#666;display:flex;align-items:center;justify-content:center;padding-bottom:3px}
.dtab.on{width:92px;height:32px;background:#fff;color:#2b84f0;border:1px solid #ddd;border-bottom:0;position:relative;top:1px;z-index:1;padding-bottom:4px}
.dframe{background:#fff;border:1px solid #d8d8d8;padding-top:11px;height:413px;position:relative}
.dpane{border:1px solid #ddd;border-bottom:0;border-radius:3px 3px 0 0;height:380px;margin-left:0}
.opts{height:28px;position:relative;display:flex;align-items:center;font-size:15px;color:#444;white-space:nowrap;padding:0 0 8px 8px}
.opt{display:flex;align-items:center;gap:5px}
.o-b{margin-left:12px}
.o-c{margin-left:9px;gap:4px}
.o-d{margin-left:9px;color:#aaa}
.o-e{margin-left:8px;color:#666}
.radio{width:18px;height:18px;border-radius:50%;border:1px solid #aaa;background:#fff;flex:none}
.radio.on{background:radial-gradient(circle,#2b7de9 0 4px,#fff 4.500px)}
.check{width:18px;height:18px;border:1px solid #aaa;border-radius:3px;flex:none;background:#fff;display:flex;align-items:center;justify-content:center;font-size:14px;font-weight:700;color:#fff;line-height:1}
.check.on{background:#2b7de9;border-color:#2b7de9}
.check.dis{background:#eee;color:#999}
.qty{border-collapse:collapse;table-layout:fixed;width:541px;margin:0 0 0 1px;font-size:15px;color:#333}
.c0{width:8px}.c1{width:76px}.c2{width:76.500px}
.qty th,.qty td{border:2px solid #3a3a3a;padding:0 0 2px;text-align:center;line-height:17px;overflow:hidden}
.qty th{font-weight:700;font-size:16px;color:#333;line-height:16px;padding-bottom:3px}
.qty th.lift{padding-bottom:9px}
.qty .rh{border:0;background:#f0f0f0;font-size:14px;text-align:left;color:#666;box-shadow:inset 0 -1px #e0e0e0}
.qty .rh.rhsel{background:#6ba9ee;color:#fff}
.r1{height:22px}
.r2{height:40px}
.r3{height:24px}
.hc{font-size:14.500px}
.m{font-family:"Liberation Mono",monospace;font-size:12px}
.n{text-align:right!important;padding-right:3px!important;font-family:"Liberation Mono",monospace;font-size:12.500px;color:#555}
.ct{color:#333}
.bold{font-weight:700;color:#222!important}
.qty .cursor{outline:2px solid #3c8ce0;outline-offset:-2px;font-size:16px}
.total td{background:#e3e3e3}
.total .rh{background:#f0f0f0}
.hscroll{position:absolute;left:1px;right:1px;top:391px;height:10px;background:#eee;border-top:1px solid #dadada}

/* annotations */
.mark{position:absolute;border:4px solid #ff2216;border-radius:3px}
.m-big{left:797px;top:290px;width:559px;height:421px}
.m-col{left:503px;top:644px;width:54px;height:188px;border-width:3.500px}
.m-nav{left:11px;top:823px;width:84px;height:55px}
.note{position:absolute;left:850px;top:813px;font-size:26px;line-height:34px;color:#ff2018;white-space:nowrap}
```
